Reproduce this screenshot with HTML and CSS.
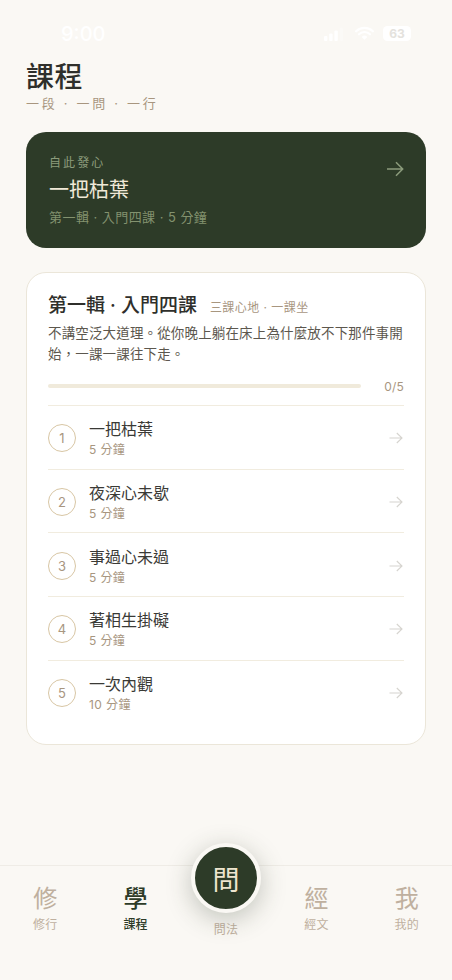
FILE: index.html
```html
<!DOCTYPE html>
<html lang="zh-Hant">
<head>
<meta charset="utf-8">
<title>課程</title>
<link rel="stylesheet" href="styles.css">
</head>
<body>
<div class="page">
  <div class="status">
    <span class="time">9:00</span>
    <div class="status-icons">
      <svg class="signal" width="20" height="14" viewBox="0 0 20 14"><rect x="0" y="9" width="3.4" height="5" rx="1"/><rect x="5.2" y="6.5" width="3.4" height="7.5" rx="1"/><rect x="10.4" y="3.5" width="3.4" height="10.5" rx="1"/><rect x="15.6" y="0.5" width="3.4" height="13.5" rx="1" opacity=".25"/></svg>
      <svg class="wifi" width="19" height="15" viewBox="0 0 20 15"><path d="M1.2 5.2a12.6 12.6 0 0 1 17.6 0M4.2 8.3a8.3 8.3 0 0 1 11.6 0" fill="none" stroke="#fff" stroke-width="2.3" stroke-linecap="round"/><path d="M10 14.2l-3-3.1a4.3 4.3 0 0 1 6 0z" fill="#fff"/></svg>
      <span class="battery">63</span>
    </div>
  </div>
  <header class="head">
    <h1 class="title">課程</h1>
    <p class="subtitle">一段 · 一問 · 一行</p>
  </header>
  <section class="hero">
    <div>
      <p class="hero-eyebrow">自此發心</p>
      <p class="hero-title">一把枯葉</p>
      <p class="hero-meta">第一輯 · 入門四課 · 5 分鐘</p>
    </div>
    <svg class="hero-arrow" width="18" height="16" viewBox="0 0 18 16"><path d="M1 8h15.5M10 1.3L16.700 8 10 14.700" fill="none" stroke="currentColor" stroke-width="1.500"/></svg>
  </section>
  <section class="card">
    <div class="card-head">
      <h2 class="card-title">第一輯 · 入門四課</h2>
      <span class="card-note">三課心地 · 一課坐</span>
    </div>
    <p class="card-desc">不講空泛大道理。從你晚上躺在床上為什麼放不下那件事開始，一課一課往下走。</p>
    <div class="progress">
      <div class="track"></div>
      <span class="count">0/5</span>
    </div>
    <ul class="lessons">
      <li class="lesson"><span class="num">1</span><div class="lesson-text"><p class="lesson-name">一把枯葉</p><p class="lesson-time">5 分鐘</p></div><svg class="row-arrow" width="14" height="12" viewBox="0 0 14 12"><path d="M.5 6h12.500M7.800 1l5.200 5-5.200 5" fill="none" stroke="currentColor" stroke-width="1.100"/></svg></li>
      <li class="lesson"><span class="num">2</span><div class="lesson-text"><p class="lesson-name">夜深心未歇</p><p class="lesson-time">5 分鐘</p></div><svg class="row-arrow" width="14" height="12" viewBox="0 0 14 12"><path d="M.5 6h12.500M7.800 1l5.200 5-5.200 5" fill="none" stroke="currentColor" stroke-width="1.100"/></svg></li>
      <li class="lesson"><span class="num">3</span><div class="lesson-text"><p class="lesson-name">事過心未過</p><p class="lesson-time">5 分鐘</p></div><svg class="row-arrow" width="14" height="12" viewBox="0 0 14 12"><path d="M.5 6h12.500M7.800 1l5.200 5-5.200 5" fill="none" stroke="currentColor" stroke-width="1.100"/></svg></li>
      <li class="lesson"><span class="num">4</span><div class="lesson-text"><p class="lesson-name">著相生掛礙</p><p class="lesson-time">5 分鐘</p></div><svg class="row-arrow" width="14" height="12" viewBox="0 0 14 12"><path d="M.5 6h12.500M7.800 1l5.200 5-5.200 5" fill="none" stroke="currentColor" stroke-width="1.100"/></svg></li>
      <li class="lesson"><span class="num">5</span><div class="lesson-text"><p class="lesson-name">一次內觀</p><p class="lesson-time">10 分鐘</p></div><svg class="row-arrow" width="14" height="12" viewBox="0 0 14 12"><path d="M.5 6h12.500M7.800 1l5.200 5-5.200 5" fill="none" stroke="currentColor" stroke-width="1.100"/></svg></li>
    </ul>
  </section>
  <nav class="tabs">
    <div class="tab"><span class="tab-glyph">修</span><span class="tab-label">修行</span></div>
    <div class="tab active"><span class="tab-glyph">學</span><span class="tab-label">課程</span></div>
    <div class="tab ask"><span class="fab">問</span><span class="tab-label">問法</span></div>
    <div class="tab"><span class="tab-glyph">經</span><span class="tab-label">經文</span></div>
    <div class="tab"><span class="tab-glyph">我</span><span class="tab-label">我的</span></div>
  </nav>
</div>
</body>
</html>
```
FILE: styles.css
```css
* { box-sizing: border-box; margin: 0; padding: 0; }
html, body { height: 100%; }
body {
  background: #faf8f4;
  font-family: Inter, "Noto Sans CJK TC", sans-serif;
  color: #2f2f2b;
}
.page {
  width: 452px;
  height: 980px;
  display: flex;
  flex-direction: column;
  overflow: hidden;
  position: relative;
}
.status {
  height: 56px;
  padding: 21px 41px 0 61px;
  display: flex;
  justify-content: space-between;
  align-items: flex-start;
  color: #fff;
}
.time { font-size: 20px; font-weight: 500; line-height: 26px; }
.status-icons { display: flex; align-items: center; padding-top: 5px; }
.signal { fill: #fff; margin-right: 11px; }
.wifi { margin-right: 9px; }
.battery {
  width: 28px; height: 15px; background: #fff; border-radius: 4.500px;
  color: #e4e2dd; font-size: 12px; font-weight: 700; line-height: 15px; text-align: center;
}
.head { padding: 3px 26px 0; }
.title { font-size: 28px; font-weight: 500; line-height: 36px; color: #2f2f2b; letter-spacing: .4px; }
.subtitle { font-size: 13px; line-height: 18px; margin-top: -1px; letter-spacing: 2.700px; color: #a8967f; }
.hero {
  margin: 20px 26px 0;
  height: 116px;
  background: #2d3b28;
  border-radius: 20px;
  padding: 22px 22px 0 23px;
  display: flex;
  justify-content: space-between;
  align-items: flex-start;
}
.hero-eyebrow { font-size: 12px; line-height: 17px; letter-spacing: 2.100px; color: #8c9c7c; }
.hero-title { font-size: 20px; line-height: 28px; margin-top: 5px; color: #f0e9d8; }
.hero-meta { font-size: 13px; line-height: 18px; margin-top: 4px; letter-spacing: .45px; color: #83926f; }
.hero-arrow { color: #8c9c7c; margin-top: 7px; }
.card {
  margin: 24px 26px 0;
  height: 473px;
  background: #fff;
  border: 1px solid #ebe6d9;
  border-radius: 20px;
  padding: 21px 21px 0;
}
.card-head { display: flex; align-items: center; gap: 13px; height: 24px; }
.card-title { font-size: 19px; font-weight: 500; line-height: 24px; color: #2f2f2b; }
.card-note { font-size: 12px; color: #a8967f; line-height: 18px; padding-top: 3px; letter-spacing: .45px; }
.card-desc { font-size: 13.500px; line-height: 20.500px; margin-top: 5px; color: #5c574e; letter-spacing: .15px; }
.progress { display: flex; align-items: center; justify-content: space-between; margin-top: 13px; height: 18px; }
.track { width: 313px; height: 4px; border-radius: 2px; background: #f0eadb; }
.count { font-size: 12px; color: #a8967f; letter-spacing: .2px; }
.lessons { list-style: none; margin-top: 10px; }
.lesson {
  height: 63.700px;
  border-top: 1px solid #f1ecdf;
  padding-top: 2px;
  display: flex;
  align-items: center;
}
.num {
  width: 28px; height: 28px; flex: none;
  border: 1px solid #d8c6a4; border-radius: 50%;
  display: flex; align-items: center; justify-content: center;
  font-size: 13px; color: #a8967f;
}
.lesson-text { margin-left: 13px; flex: 1; }
.lesson-name { font-size: 16px; line-height: 22px; color: #3a3a36; }
.lesson-time { font-size: 12px; line-height: 17px; margin-top: 1px; color: #a8967f; letter-spacing: .4px; }
.row-arrow { color: #d6d4cf; margin-right: 1px; }
.tabs {
  position: absolute;
  left: 0; right: 0; top: 865px; bottom: 0;
  border-top: 1px solid #efece6;
  background: #faf8f4;
  display: grid;
  grid-template-columns: repeat(5, 1fr);
}
.tab { display: flex; flex-direction: column; align-items: center; padding-top: 16px; color: #bfb09f; position: relative; }
.tab-glyph { font-size: 24px; line-height: 34px; font-weight: 400; }
.tab-label { font-size: 12px; line-height: 18px; color: #bfb09f; letter-spacing: .2px; }
.tab.active .tab-glyph { color: #2d3b28; font-weight: 500; }
.tab.active .tab-label { color: #2d3b28; font-weight: 500; }
.ask .tab-label { margin-top: 39px; }
.fab {
  position: absolute;
  top: -23px;
  left: 50%;
  margin-left: -35px;
  width: 70px; height: 70px;
  border-radius: 50%;
  background: #2d3b28;
  border: 4px solid #faf8f4;
  box-shadow: 0 6px 26px rgba(45, 59, 40, .28);
  color: #eee5cf;
  font-size: 27px;
  display: flex; align-items: center; justify-content: center;
}
```
